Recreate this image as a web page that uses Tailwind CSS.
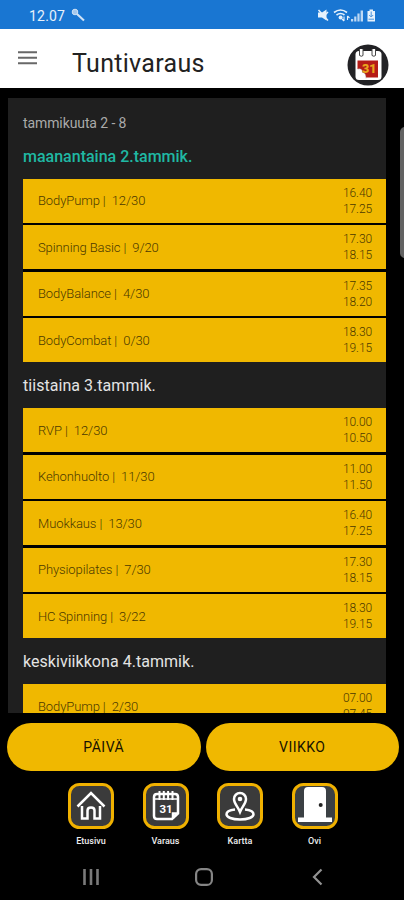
<!DOCTYPE html>
<html lang="fi">
<head>
<meta charset="utf-8">
<title>Tuntivaraus</title>
<script src="https://cdn.jsdelivr.net/npm/@tailwindcss/browser@4"></script>
</head>
<body class="bg-black">
<div class="relative flex h-[900px] w-[404px] flex-col overflow-hidden bg-black font-['Roboto',sans-serif]">
  <div class="flex h-[29px] shrink-0 items-center bg-[#1976d2] pt-[3px] pl-[29px] text-white/90">
    <span class="w-[42px] text-[14px] tracking-[0.2px]">12.07</span>
    <svg class="h-4 w-4" viewBox="0 0 16 16" fill="none" stroke="#cfe2f6"><circle cx="4" cy="4" r="2.800" fill="#a5c8ec" stroke-width="1"/><path d="M6 6 13 12.500" stroke-width="2.100"/></svg>
    <svg class="ml-[230px] h-4 w-[62px]" viewBox="0 0 62 16" fill="#e6f1fc" stroke="#e6f1fc">
      <path d="M1 4.500h4l4.500-3v11L5 9.500H1z" stroke="none"/><path d="M1.500 2 11 12.500M8 7l3-3" stroke-width="1.500"/>
      <g fill="none" stroke-width="1.600"><path d="M17 4.500q6.500-5 13 0M19.500 7q4-3 8 0"/><path d="M27 8.500v4.500M25 11l2 2M30.500 12V8M30.500 8l2 2" stroke-width="1.100"/></g><circle cx="23.600" cy="9.500" r="2" stroke="none"/>
      <path d="M34 11h2.200v2.500H34zM37.200 8.500h2.200v5h-2.200zM40.400 5.500h2.200v8h-2.200zM43.600 2.500h2.400v11h-2.400z" stroke="none" opacity=".8"/>
      <path d="M52.500 1.500h3.500V3h2v10.500h-7.500V3h2z" stroke="none"/><path d="M54.200 3.500v5M52.200 7l2 2 2-2M51.500 11.200h5.500" stroke="#4c94dc" fill="none"/>
    </svg>
  </div>
  <header class="flex h-[59px] shrink-0 items-center bg-white pl-[18px]">
    <svg class="-mt-[3px] h-4 w-5" viewBox="0 0 20 16" stroke="#686868" stroke-width="1.900"><path d="M0 3.200h19M0 8.700h19M0 14.200h19"/></svg>
    <h1 class="ml-[34px] pt-[9px] text-[25px] leading-none tracking-[0.3px] text-[#222]">Tuntivaraus</h1>
    <svg class="mt-[12px] mr-[15px] ml-auto h-[42px] w-[42px]" viewBox="0 0 42 42">
      <circle cx="21" cy="21" r="20.500" fill="#222225"/>
      <rect x="8.500" y="7" width="26" height="29" rx="3.500" fill="#fff"/>
      <path d="M10.500 16.500h20.500V33.500H19l-8.500-9z" fill="#b51c17"/>
      <path d="M10.500 25q5-1 5 3.500 3.500 0 3.500 6" fill="#fff" stroke="#999" stroke-width=".4"/>
      <path d="M12.500 5v6.500q2 1.500 3.500 0V5M25 5v6.500q2 1.500 3.500 0V5" fill="#fff" stroke="#444" stroke-width="1"/>
      <text x="15" y="29" font-family="Roboto" font-size="12.500" font-weight="900" fill="#e9a51d">31</text>
    </svg>
  </header>
  <main class="mt-[10px] ml-2 h-[615px] w-[378px] shrink-0 overflow-hidden bg-[#1f1f1f] pl-[15px]">
    <p class="h-[42px] pt-[15px] text-[14px] leading-[20px] tracking-[-0.1px] text-[#aaa]">tammikuuta 2 - 8</p>
    <h2 class="h-[38.500px] pt-[6.500px] text-[16px] leading-[20px] font-medium text-[#1fb8a3]">maanantaina 2.tammik.</h2>
    <div id="mon" class="flex flex-col gap-[2.500px] bg-black"></div>
    <h2 class="h-[46px] pt-[14px] text-[16px] leading-[20px] tracking-[0.040px] text-[#e4e4e4]">tiistaina 3.tammik.</h2>
    <div id="tue" class="flex flex-col gap-[2.500px] bg-black"></div>
    <h2 class="h-[46px] pt-[14px] text-[16px] leading-[20px] tracking-[0.040px] text-[#e4e4e4]">keskiviikkona 4.tammik.</h2>
    <div id="wed" class="flex flex-col gap-[2.500px] bg-black"></div>
  </main>
  <template id="row"><div class="flex h-[44px] items-center justify-between bg-[#f0b800] pr-[14px] pl-[15px] text-[#4b3900]"><span class="whitespace-pre text-[13px] font-light tracking-[-0.1px] pt-px"></span><span class="text-right text-[12px] leading-[16px] font-light tracking-[-0.1px] whitespace-pre"></span></div></template>
  <div class="mt-[10px] flex h-[48px] shrink-0 gap-[5px] pr-[5px] pl-[7px] text-[14px] tracking-[0.5px] text-[#171200]">
    <button class="flex-1 rounded-full bg-[#f0b800] pt-px">PÄIVÄ</button>
    <button class="flex-1 rounded-full bg-[#f0b800] pt-px">VIIKKO</button>
  </div>
  <nav class="mt-[12px] flex h-[67px] shrink-0 gap-[28.500px] pl-[68px] text-center text-[9px] leading-none font-medium text-[#eee]">
    <div class="w-[46px]"><svg class="h-[46px] w-[46px]" viewBox="0 0 46 46" fill="none" stroke="#fff" stroke-width="2.500"><rect x="1.500" y="1.500" width="43" height="43" rx="10" fill="#3b3b3b" stroke="#f0b100" stroke-width="3"/><path d="M9.500 23.500 23 10l13.500 13.500M14 23v12.500h5.500v-8q0-3 3.500-3t3.500 3v8H32V23"/></svg><span class="mt-[8px] block">Etusivu</span></div>
    <div class="w-[46px]"><svg class="h-[46px] w-[46px]" viewBox="0 0 46 46" fill="none" stroke="#fff" stroke-width="2.500"><rect x="1.500" y="1.500" width="43" height="43" rx="10" fill="#3b3b3b" stroke="#f0b100" stroke-width="3"/><path d="M35 30.500V14q0-3-3-3H14q-3 0-3 3v19q0 3 3 3h15zM35 30.500h-5V36"/><path d="M11 16h24" stroke-width="1.500"/><path d="M16.500 8v9M20.800 8v9M25.100 8v9M29.500 8v9" stroke-width="2"/><text x="16.500" y="30" font-family="Roboto" font-size="11.500" font-weight="700" fill="#fff" stroke="none">31</text></svg><span class="mt-[8px] block">Varaus</span></div>
    <div class="w-[46px]"><svg class="h-[46px] w-[46px]" viewBox="0 0 46 46" fill="none" stroke="#fff" stroke-width="2.500"><rect x="1.500" y="1.500" width="43" height="43" rx="10" fill="#3b3b3b" stroke="#f0b100" stroke-width="3"/><path d="M23 29c-2-5-6-8.500-6-13a6 6 0 0 1 12 0c0 4.500-4 8-6 13z"/><circle cx="23" cy="16" r="2.300" fill="#fff" stroke="none"/><path d="M18 26.500c-5 .5-8.500 2.200-8.500 4.700 0 3 5.500 5.300 13.500 5.300s13.500-2.300 13.500-5.300c0-2.500-3.500-4.200-8.500-4.700"/></svg><span class="mt-[8px] block">Kartta</span></div>
    <div class="w-[46px]"><svg class="h-[46px] w-[46px]" viewBox="0 0 46 46"><rect x="1.500" y="1.500" width="43" height="43" rx="10" fill="#3b4044" stroke="#f0b100" stroke-width="3"/><path d="M12 8q0-4 4-4h14q4 0 4 4v26.500h6V39H6v-4.500h6z" fill="#fff"/><circle cx="28.700" cy="22" r="2" fill="#222"/></svg><span class="mt-[8px] block">Ovi</span></div>
  </nav>
  <div class="mt-[11px] flex h-[31px] items-center pl-[83px]">
    <svg class="h-[18px] w-4" viewBox="0 0 16 18" stroke="#7a7a7a" stroke-width="2.600"><path d="M1.500 1v16M8 1v16M14.500 1v16"/></svg>
    <svg class="ml-[96px] h-[18px] w-[18px]" viewBox="0 0 18 18"><rect x="1.100" y="1.100" width="15.800" height="15.800" rx="5" fill="none" stroke="#858585" stroke-width="2.200"/></svg>
    <svg class="ml-[98px] h-[18px] w-3" viewBox="0 0 12 18" fill="none" stroke="#929292" stroke-width="2.200"><path d="M10.500 1.500 3 9l7.500 7.500"/></svg>
  </div>
  <div class="absolute top-[127px] left-[400px] h-[131px] w-[6px] rounded-l-[5px] bg-[#626262]"></div>
</div>
<script>
const days = {
  mon: [['BodyPump','12/30','16.40','17.25'],['Spinning Basic','9/20','17.30','18.15'],['BodyBalance','4/30','17.35','18.20'],['BodyCombat','0/30','18.30','19.15']],
  tue: [['RVP','12/30','10.00','10.50'],['Kehonhuolto','11/30','11.00','11.50'],['Muokkaus','13/30','16.40','17.25'],['Physiopilates','7/30','17.30','18.15'],['HC Spinning','3/22','18.30','19.15']],
  wed: [['BodyPump','2/30','07.00','07.45']]
};
for (const [id, rows] of Object.entries(days)) for (const [name, count, start, end] of rows) {
  const row = document.getElementById('row').content.cloneNode(true);
  const [a, b] = row.querySelectorAll('span');
  a.textContent = `${name} |  ${count}`;
  b.textContent = `${start}\n${end}`;
  document.getElementById(id).append(row);
}
</script>
</body>
</html>
